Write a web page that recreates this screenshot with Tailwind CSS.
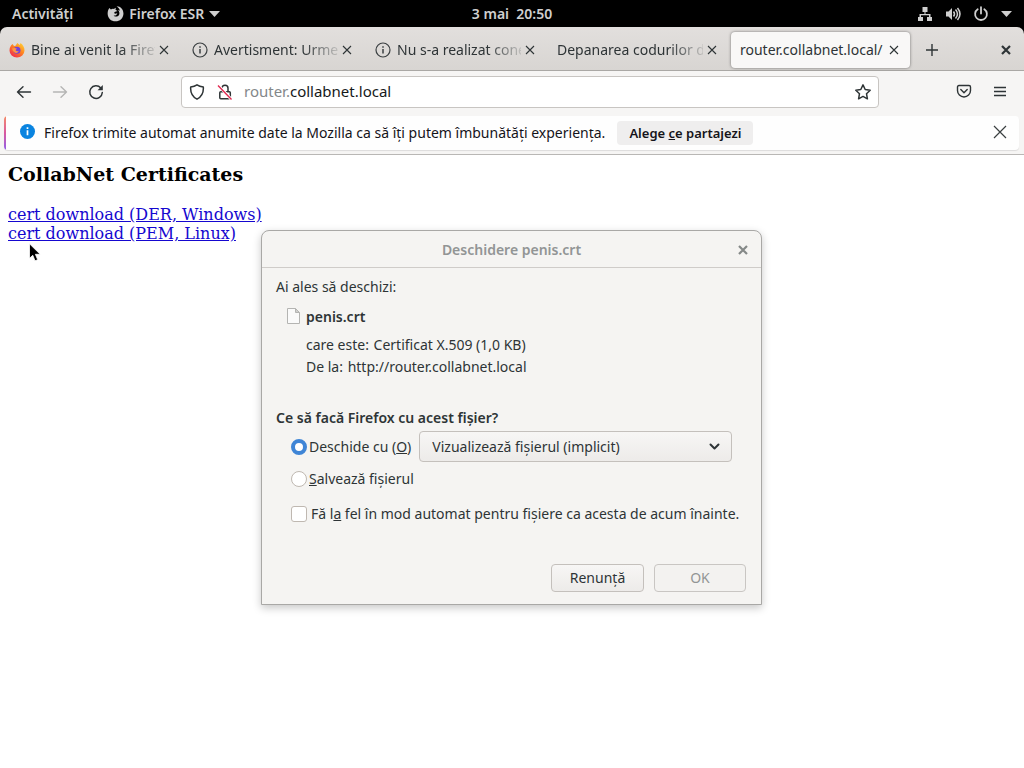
<!DOCTYPE html>
<html lang="ro">
<head>
    <meta charset="UTF-8">
    <meta name="viewport" content="width=device-width, initial-scale=1.0">
    <title>router.collabnet.local/</title>
    <script src="https://cdn.jsdelivr.net/npm/@tailwindcss/browser@4"></script>
</head>
<body class="relative min-h-screen flex flex-col bg-black font-['Noto_Sans','Open_Sans',sans-serif] text-sm text-[#2e3436] overflow-hidden">

    <!-- GNOME top bar -->
    <header class="relative h-[27px] shrink-0 flex items-center justify-between bg-black px-3 font-semibold text-[#cfcfcf]">
        <div class="flex items-center gap-[34px]">
            <button class="font-semibold">Activități</button>
            <button class="flex items-center gap-[5px] font-semibold">
                <svg class="size-[17px]" viewBox="0 0 16 16" fill="currentColor"><path d="M2.2 2.8 3.7 4.2C4.6 3.6 5.5 3.5 6.3 3.7L8.4 2.6 8 4.4 9.8 5.6 7.2 6.6C6.6 7 6.8 8 7.7 8.2L9.7 7.8C9.2 9.5 7.8 10.3 6.2 9.8 7.8 11.6 10.6 11.2 11.5 9 12 7.5 11.5 5.6 10.4 4.6 11.2 4.6 11.8 5 12.2 5.6 11.9 3.8 10.5 2.2 9 1.2 13 1.2 15.5 4.5 15.5 8.2 15.3 12.4 12.1 15.4 8 15.4 3.8 15.4.7 12.3.6 8.2.6 6 1.2 4.2 2.2 2.8Z"/></svg>
                <span>Firefox ESR</span>
                <svg class="w-[11px] h-[6px]" viewBox="0 0 11 6" fill="currentColor"><path d="M0 0h11L5.5 6z"/></svg>
            </button>
        </div>
        <button class="absolute left-1/2 -translate-x-1/2 font-semibold whitespace-pre">3 mai  20:50</button>
        <button class="flex items-center gap-3" aria-label="Sistem">
            <svg class="w-4 h-4" viewBox="0 0 16 16" fill="currentColor"><path d="M5.500 1h5v5h-2v2h5v3H15v4h-5v-4h2V9.300H4V11h2v4H1v-4h1.500V8h5V6h-2z"/></svg>
            <svg class="w-4 h-4" viewBox="0 0 16 16" fill="none" stroke="currentColor" stroke-width="1.500"><path d="M1 5.500h2.500L7 2v12l-3.500-3.500H1z" fill="currentColor" stroke="none"/><path d="M8.500 5.500q2 2.500 0 5M10.500 3.500q4 4.500 0 9"/><path d="M12.500 2q5 6 0 12"/></svg>
            <svg class="w-4 h-4" viewBox="0 0 16 16" fill="none" stroke="currentColor" stroke-width="1.800" stroke-linecap="round"><path d="M8 1.200v6.300M4.700 3.200a5.900 5.900 0 1 0 6.600 0"/></svg>
            <svg class="w-[11px] h-[6px]" viewBox="0 0 11 6" fill="currentColor"><path d="M0 0h11L5.500 6z"/></svg>
        </button>
    </header>

    <!-- Tab strip -->
    <nav class="h-11 shrink-0 flex items-center rounded-t-[7px] border-b border-[#aaa8a5] bg-linear-to-b from-[#e2dfdd] to-[#d8d5d2] pt-[2px] pr-3">
        <div class="w-[183px] h-full flex items-center pl-[9px]">
            <svg class="w-4 h-4 shrink-0 mr-[6px]" viewBox="0 0 16 16">
                <defs><linearGradient id="fox" x1="1" y1="0" x2=".2" y2="1"><stop offset="0" stop-color="#ffde3b"/><stop offset=".45" stop-color="#ff8a1f"/><stop offset="1" stop-color="#f0254f"/></linearGradient></defs>
                <path d="M2 3.500 3.500 2 5 4l1.500-.3L8.300 1l2.500 2L11.500 1q4 3 4 7.500A7.500 7 0 0 1 .500 8.500Q.500 5.500 2 3.500Z" fill="url(#fox)"/>
                <circle cx="8" cy="8.200" r="3.500" fill="#7542d8"/>
                <path d="M3 6.500q3-1 5 .3L6.500 8q1 1.800 3.500 1-1.500 2.500-4 1.800Q3.500 9.500 3 6.500Z" fill="#ff9640"/>
            </svg>
            <span class="w-[124px] overflow-hidden whitespace-nowrap [mask-image:linear-gradient(to_right,black_90px,transparent_130px)]">Bine ai venit la Firef</span>
            <button class="ml-1" aria-label="Închide fila"><svg class="w-[10px] h-[10px]" viewBox="0 0 10 10" stroke="#2e3436" stroke-width="1.100"><path d="m1 1 8 8M9 1 1 9"/></svg></button>
        </div>
        <div class="w-[183px] h-full flex items-center pl-[9px]">
            <svg class="w-4 h-4 shrink-0 mr-[6px]" viewBox="0 0 16 16" fill="none" stroke="#3a3f41" stroke-width="1.200"><circle cx="8" cy="8" r="7"/><path d="M8 7v4.500M8 4.300v1.400" stroke-width="1.500"/></svg>
            <span class="w-[124px] overflow-hidden whitespace-nowrap [mask-image:linear-gradient(to_right,black_90px,transparent_130px)]">Avertisment: Urme</span>
            <button class="ml-1" aria-label="Închide fila"><svg class="w-[10px] h-[10px]" viewBox="0 0 10 10" stroke="#2e3436" stroke-width="1.100"><path d="m1 1 8 8M9 1 1 9"/></svg></button>
        </div>
        <div class="w-[182px] h-full flex items-center pl-[9px]">
            <svg class="w-4 h-4 shrink-0 mr-[6px]" viewBox="0 0 16 16" fill="none" stroke="#3a3f41" stroke-width="1.200"><circle cx="8" cy="8" r="7"/><path d="M8 7v4.500M8 4.300v1.400" stroke-width="1.500"/></svg>
            <span class="w-[124px] overflow-hidden whitespace-nowrap [mask-image:linear-gradient(to_right,black_90px,transparent_130px)]">Nu s-a realizat cone</span>
            <button class="ml-1" aria-label="Închide fila"><svg class="w-[10px] h-[10px]" viewBox="0 0 10 10" stroke="#2e3436" stroke-width="1.100"><path d="m1 1 8 8M9 1 1 9"/></svg></button>
        </div>
        <div class="w-[183px] h-full flex items-center pl-[9px]">
            <span class="w-[146px] overflow-hidden whitespace-nowrap [mask-image:linear-gradient(to_right,black_112px,transparent_152px)]">Depanarea codurilor d</span>
            <button class="ml-1" aria-label="Închide fila"><svg class="w-[10px] h-[10px]" viewBox="0 0 10 10" stroke="#2e3436" stroke-width="1.100"><path d="m1 1 8 8M9 1 1 9"/></svg></button>
        </div>
        <div class="w-[179px] h-9 flex items-center rounded-[4px] bg-[#f9f8f7] pl-[9px] shadow-[0_0_3px_rgba(0,0,0,0.5)]">
            <span class="w-[145px] overflow-hidden whitespace-nowrap">router.collabnet.local/</span>
            <button class="ml-1" aria-label="Închide fila"><svg class="w-[10px] h-[10px]" viewBox="0 0 10 10" stroke="#2e3436" stroke-width="1.100"><path d="m1 1 8 8M9 1 1 9"/></svg></button>
        </div>
        <button class="ml-[15px]" aria-label="Filă nouă"><svg class="w-[14px] h-[14px]" viewBox="0 0 14 14" stroke="#2e3436" stroke-width="1.400"><path d="M7 1v12M1 7h12"/></svg></button>
        <button class="ml-auto" aria-label="Închide"><svg class="w-3 h-3" viewBox="0 0 12 12" stroke="#2e3436" stroke-width="2.200"><path d="m2 2 8 8M10 2 2 10"/></svg></button>
    </nav>

    <!-- Navigation toolbar -->
    <div class="h-[41px] shrink-0 flex items-center bg-[#f6f5f4] pl-4 pr-4">
        <div class="w-[165px] flex items-center gap-5">
            <button aria-label="Înapoi"><svg class="w-4 h-4" viewBox="0 0 16 16" fill="none" stroke="#2e3436" stroke-width="1.400" stroke-linecap="round" stroke-linejoin="round"><path d="M14.500 8h-13M7 2.700 1.500 8 7 13.300"/></svg></button>
            <button aria-label="Înainte" disabled><svg class="w-4 h-4" viewBox="0 0 16 16" fill="none" stroke="#b5b5b4" stroke-width="1.400" stroke-linecap="round" stroke-linejoin="round"><path d="M1.500 8h13M9 2.700 14.500 8 9 13.300"/></svg></button>
            <button aria-label="Reîncarcă"><svg class="w-4 h-4" viewBox="0 0 16 16" fill="none" stroke="#2e3436" stroke-width="1.500" stroke-linecap="round"><path d="M12.800 4A6.300 6.300 0 1 0 14.300 8.500"/><path d="M14.800 1v5.200H9.600z" fill="#2e3436" stroke="none"/></svg></button>
        </div>
        <div class="flex-1 h-8 flex items-center rounded-[4px] border border-[#c8c5c2] bg-white px-[7px]">
            <svg class="w-4 h-4" viewBox="0 0 16 16" fill="none" stroke="#2e3436" stroke-width="1.500" stroke-linejoin="round"><path d="M8 .8Q10.500 2.500 14.300 3q.7 8.500-6.300 12.200Q1 11.500 1.700 3 5.500 2.500 8 .8Z"/></svg>
            <svg class="ml-3 w-4 h-4" viewBox="0 0 16 16" fill="none" stroke="#2e3436" stroke-width="1.500"><rect x="2.800" y="7.800" width="10.500" height="7" rx="1"/><path d="M5 7.500V4.300a3 3 0 0 1 6 0v3.200"/><path d="m1.500 1.500 13 14" stroke="#fff" stroke-width="3"/><path d="m1 1.500 13.500 14" stroke="#e22850" stroke-width="1.400"/></svg>
            <div class="ml-[11px] flex-1 text-[15px] text-[#84888a]" role="textbox" contenteditable="true" aria-label="Adresă" spellcheck="false">router.<span class="text-[#15191a]">collabnet.local</span></div>
            <button aria-label="Marchează pagina"><svg class="w-4 h-4" viewBox="0 0 16 16" fill="none" stroke="#2e3436" stroke-width="1.500" stroke-linejoin="round"><path d="m8 .9 2.200 4.600 5 .7-3.700 3.500.9 5.100L8 12.400l-4.400 2.400.9-5.100L.8 6.200l5-.7z"/></svg></button>
        </div>
        <div class="w-[129px] flex items-center justify-end gap-5">
            <button aria-label="Pocket"><svg class="w-4 h-4" viewBox="0 0 16 16" fill="none" stroke="#2e3436" stroke-width="1.400" stroke-linecap="round" stroke-linejoin="round"><path d="M3 1.500h10q1.500 0 1.500 1.500V6.500A6.500 6.500 0 0 1 1.500 6.500V3Q1.500 1.500 3 1.500Z"/><path d="m4.800 5.500 3.200 3.200L11.200 5.500"/></svg></button>
            <button aria-label="Meniu"><svg class="w-4 h-4" viewBox="0 0 16 16" stroke="#2e3436" stroke-width="1.300"><path d="M2 3.500h12M2 7.500h12M2 11.500h12"/></svg></button>
        </div>
    </div>

    <!-- Notification bar -->
    <div class="shrink-0 border-b border-[#b9b7b5] bg-[#f6f5f4] pl-1 pr-[5px] pt-1 pb-1">
        <div class="h-[34px] flex items-center overflow-hidden rounded-[4px] bg-[#fefefe] pr-3 text-[#15141a] shadow-[0_1px_1px_rgba(0,0,0,0.1)]">
            <span class="w-[2px] h-full bg-linear-to-b from-[#f58b62] via-[#d9589f] to-[#8f5ae8]"></span>
            <svg class="ml-[14px] mb-[3px] w-[15px] h-[15px]" viewBox="0 0 15 15"><circle cx="7.500" cy="7.500" r="7.500" fill="#0a84e0"/><path d="M7.500 6.300v5M7.500 3.300v1.700" stroke="#fff" stroke-width="1.700"/></svg>
            <span class="ml-[9px] whitespace-nowrap">Firefox trimite automat anumite date la Mozilla ca să îți putem îmbunătăți experiența.</span>
            <button class="ml-3 h-6 rounded-[4px] bg-[#efeeee] px-3 text-[13px] font-semibold whitespace-nowrap">Alege <u>c</u>e partajezi</button>
            <button class="ml-auto mb-[3px]" aria-label="Închide notificarea"><svg class="w-[14px] h-[14px]" viewBox="0 0 14 14" stroke="#3a3f41" stroke-width="1.200"><path d="m1 1 12 12M13 1 1 13"/></svg></button>
        </div>
    </div>

    <!-- Page content -->
    <main class="flex-1 bg-white px-2 pt-2 font-['DejaVu_Serif',serif] text-base leading-[19px] text-black">
        <h3 class="mb-[19px] text-[19px] leading-[23px] font-bold">CollabNet Certificates</h3>
        <a href="#" class="text-[#1507cf] underline">cert download (DER, Windows)</a><br>
        <a href="#" class="text-[#1507cf] underline">cert download (PEM, Linux)</a>
    </main>

    <!-- Open file dialog -->
    <section role="dialog" aria-labelledby="dialogTitle" class="absolute top-[230px] left-1/2 w-[501px] -translate-x-[251px] rounded-t-[8px] border border-[#a9a8a6] bg-[#f5f4f2] shadow-[0_3px_9px_rgba(0,0,0,0.22)]">
        <div class="relative h-[37px] flex items-center justify-center border-b border-[#cfccc9] pt-px font-semibold text-[#929595]">
            <h2 id="dialogTitle">Deschidere penis.crt</h2>
            <button class="absolute right-3" aria-label="Închide"><svg class="w-3 h-3" viewBox="0 0 12 12" stroke="#858988" stroke-width="2.200"><path d="m2 2 8 8M10 2 2 10"/></svg></button>
        </div>
        <div class="px-[15px] pt-2 pb-3 leading-[22px]">
            <p class="-ml-px">Ai ales să deschizi:</p>
            <div class="mt-2 flex items-center gap-[6px] pl-[10px] font-semibold">
                <svg class="w-[13px] h-4 mb-[3px]" viewBox="0 0 13 16" fill="#fafafa" stroke="#b4b4b2"><path d="M.500.500h8l4 4v11H.500z"/><path d="M8.500.500v4h4z" fill="#cfcfcd"/></svg>
                <span>penis.crt</span>
            </div>
            <p class="mt-[6px] pl-[29px]">care este: <span class="ml-px">Certificat X.509 (1,0 KB)</span></p>
            <p class="pl-[29px]">De la: <span class="ml-px">http://router.collabnet.local</span></p>
            <p class="-ml-px mt-[29px] font-semibold">Ce să facă Firefox cu acest fișier?</p>
            <div class="mt-[2px] h-[31px] flex items-center px-[14px]">
                <input id="openWith" type="radio" name="action" checked class="size-4 appearance-none rounded-full border border-[#bfb8b1] bg-white checked:border-[4px] checked:border-[#3f85d6]">
                <label for="openWith" class="ml-[2px] whitespace-nowrap">Deschide cu (<u>O</u>)</label>
                <div class="relative ml-2 flex-1">
                    <select aria-label="Deschide cu" class="w-full h-[31px] appearance-none rounded-[4px] border border-[#c4c0bc] bg-linear-to-b from-[#f7f6f5] to-[#edebe9] pl-3">
                        <option>Vizualizează fișierul (implicit)</option>
                    </select>
                    <svg class="absolute top-[11px] right-3 w-[11px] h-[9px] pointer-events-none" viewBox="0 0 11 9" fill="none" stroke="#2e3436" stroke-width="2" stroke-linecap="round" stroke-linejoin="round"><path d="m1.500 2.500 4 4 4-4"/></svg>
                </div>
            </div>
            <div class="mt-[6px] flex items-center pl-[14px]">
                <input id="save" type="radio" name="action" class="size-4 appearance-none rounded-full border border-[#bfb8b1] bg-white checked:border-[4px] checked:border-[#3f85d6]">
                <label for="save" class="ml-[2px]"><u>S</u>alvează fișierul</label>
            </div>
            <div class="mt-[13px] flex items-center pl-[14px]">
                <input id="always" type="checkbox" class="size-4 appearance-none rounded-[3px] border border-[#bfb8b1] bg-white checked:bg-[#3f85d6]">
                <label for="always" class="ml-1 whitespace-nowrap">Fă l<u>a</u> fel în mod automat pentru fișiere ca acesta de acum înainte.</label>
            </div>
            <div class="mt-[39px] flex justify-end gap-[10px]">
                <button class="w-[93px] h-7 rounded-[4px] border border-[#c4c0bc] bg-linear-to-b from-[#f7f6f5] to-[#edebe9] leading-5">Renunță</button>
                <button disabled class="w-[92px] h-7 rounded-[4px] border border-[#c9c6c3] bg-[#f3f2f0] leading-5 text-[#929595]">OK</button>
            </div>
        </div>
    </section>

    <!-- Mouse pointer -->
    <svg class="absolute top-[243px] left-[29px] w-3 h-[19px] pointer-events-none" viewBox="0 0 12 19"><path d="M.500.800v14.500l3.300-3 2.200 5.500 2.700-1.100-2.300-5.400h4.800z" fill="#000" stroke="#fff" stroke-width=".8"/></svg>

</body>
</html>
